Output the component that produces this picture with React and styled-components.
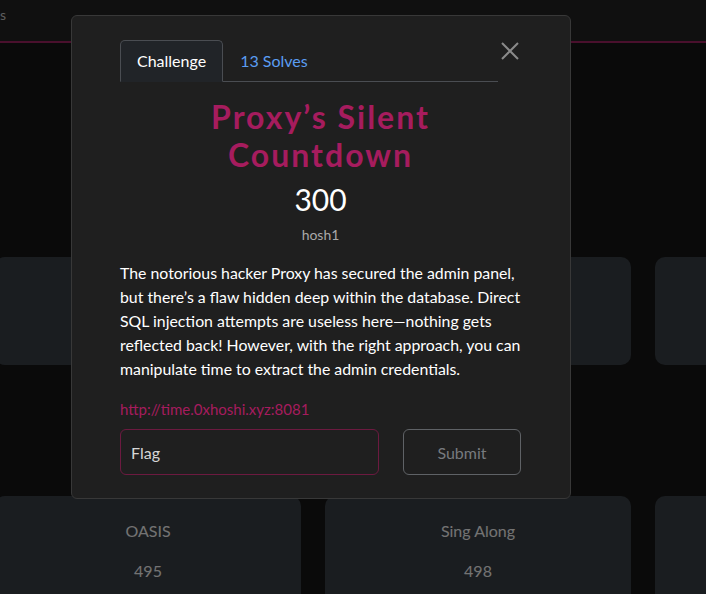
import styled, { createGlobalStyle } from 'styled-components';

const Global = createGlobalStyle`
  html, body {
    margin: 0;
    padding: 0;
    background: #141414;
    font-family: Lato, "Open Sans", sans-serif;
    overflow: hidden;
  }
`;

const challenges = [
  [{ name: 'Intro', points: 100 }, { name: 'Login Portal', points: 250 }, { name: 'Cookie Jar', points: 300 }],
  [{ name: 'OASIS', points: 495 }, { name: 'Sing Along', points: 498 }, { name: 'Echo', points: 500 }],
];

export default function App() {
  return (
    <>
      <Global />
      <Page>
        <Navbar>
          <NavItem>s</NavItem>
        </Navbar>
        <Board>
          {challenges.map((row, i) => (
            <Row key={i} $top={i === 0 ? 214 : 131}>
              {row.map((c) => (
                <Card key={c.name}>
                  <CardName>{c.name}</CardName>
                  <CardPoints>{c.points}</CardPoints>
                </Card>
              ))}
            </Row>
          ))}
        </Board>
      </Page>

      <Backdrop>
        <Modal>
          <Header>
            <Tabs>
              <Tab $active>Challenge</Tab>
              <Tab>13 Solves</Tab>
            </Tabs>
            <Close aria-label="Close">
              <svg width="18" height="18" viewBox="0 0 18 18">
                <path d="M1 1 L17 17 M17 1 L1 17" stroke="#8a8a8a" strokeWidth="2" />
              </svg>
            </Close>
          </Header>
          <Title>Proxy’s Silent Countdown</Title>
          <Points>300</Points>
          <Author>hosh1</Author>
          <Description>
            The notorious hacker Proxy has secured the admin panel, but there’s a flaw hidden deep within the
            database. Direct SQL injection attempts are useless here—nothing gets reflected back! However, with
            the right approach, you can manipulate time to extract the admin credentials.
          </Description>
          <Link href="#">http://time.0xhoshi.xyz:8081</Link>
          <SubmitRow>
            <FlagInput placeholder="Flag" />
            <SubmitButton>Submit</SubmitButton>
          </SubmitRow>
        </Modal>
      </Backdrop>
    </>
  );
}

const Page = styled.div`
  min-height: 100vh;
  background: #141414;
`;

const Navbar = styled.nav`
  height: 43px;
  background: #202020;
  border-bottom: 2px solid #94205a;
  display: flex;
  align-items: center;
  padding-bottom: 12px;
  box-sizing: border-box;
`;

const NavItem = styled.span`
  color: #bbb;
  font-size: 14px;
`;

const Board = styled.div`
  margin-left: -5px;
`;

const Row = styled.div`
  display: grid;
  grid-template-columns: repeat(3, 306px);
  gap: 24px;
  margin-top: ${(p) => p.$top}px;
`;

const Card = styled.div`
  height: 108px;
  background: #343a40;
  border-radius: 10px;
  display: flex;
  flex-direction: column;
  align-items: center;
  padding-top: 25px;
  box-sizing: border-box;
  gap: 21px;
  color: #e6e6e6;
  font-size: 16px;
`;

const CardName = styled.div``;
const CardPoints = styled.div``;

const Backdrop = styled.div`
  position: fixed;
  inset: 0;
  background: rgba(0, 0, 0, 0.5);
  padding: 15px 0 0 71px;
`;

const Modal = styled.div`
  width: 500px;
  height: 484px;
  box-sizing: border-box;
  background: #1f1f1f;
  border: 1px solid #383838;
  border-radius: 6px;
  padding: 24px 49px 23px 48px;
  display: flex;
  flex-direction: column;
`;

const Header = styled.div`
  display: flex;
  align-items: flex-start;
`;

const Tabs = styled.div`
  width: 378px;
  display: flex;
  border-bottom: 1px solid #4a4d52;
`;

const Tab = styled.div`
  padding: 8px 16px;
  margin-bottom: -1px;
  font-size: 16px;
  line-height: 24px;
  border: 1px solid ${(p) => (p.$active ? '#4a4d52' : 'transparent')};
  border-bottom-color: ${(p) => (p.$active ? '#212428' : 'transparent')};
  border-radius: 5px 5px 0 0;
  background: ${(p) => (p.$active ? '#212428' : 'transparent')};
  color: ${(p) => (p.$active ? '#ffffff' : '#5b9df2')};
`;

const Close = styled.button`
  margin: 2px 0 0 3px;
  padding: 0;
  background: none;
  border: none;
  width: 18px;
  height: 18px;
  display: flex;
`;

const Title = styled.h2`
  margin: 16px 0 0;
  text-align: center;
  color: #a61c5e;
  font-size: 32px;
  font-weight: 700;
  letter-spacing: 2px;
  line-height: 38px;
  padding: 0 60px;
`;

const Points = styled.div`
  margin-top: 7px;
  text-align: center;
  color: #fff;
  font-size: 30px;
  line-height: 36px;
`;

const Author = styled.div`
  margin-top: 8px;
  text-align: center;
  color: #a9a9a9;
  font-size: 14px;
  line-height: 20px;
`;

const Description = styled.p`
  margin: 16px -6px 0 0;
  color: #fff;
  font-size: 15.85px;
  line-height: 24px;
`;

const Link = styled.a`
  margin-top: 17px;
  color: #a61c5e;
  font-size: 15px;
  line-height: 22px;
  text-decoration: none;
`;

const SubmitRow = styled.div`
  margin-top: 9px;
  display: flex;
  gap: 24px;
`;

const FlagInput = styled.input`
  width: 259px;
  height: 46px;
  box-sizing: border-box;
  background: transparent;
  border: 1px solid #6c1a40;
  border-radius: 6px;
  padding: 0 10px;
  font-family: Lato, sans-serif;
  font-size: 16px;
  color: #ddd;
  outline: none;
  &::placeholder {
    color: #d6d6d6;
  }
`;

const SubmitButton = styled.button`
  width: 118px;
  height: 46px;
  background: transparent;
  border: 1px solid #5f6266;
  border-radius: 6px;
  font-family: Lato, sans-serif;
  font-size: 16px;
  color: #777a7e;
`;
